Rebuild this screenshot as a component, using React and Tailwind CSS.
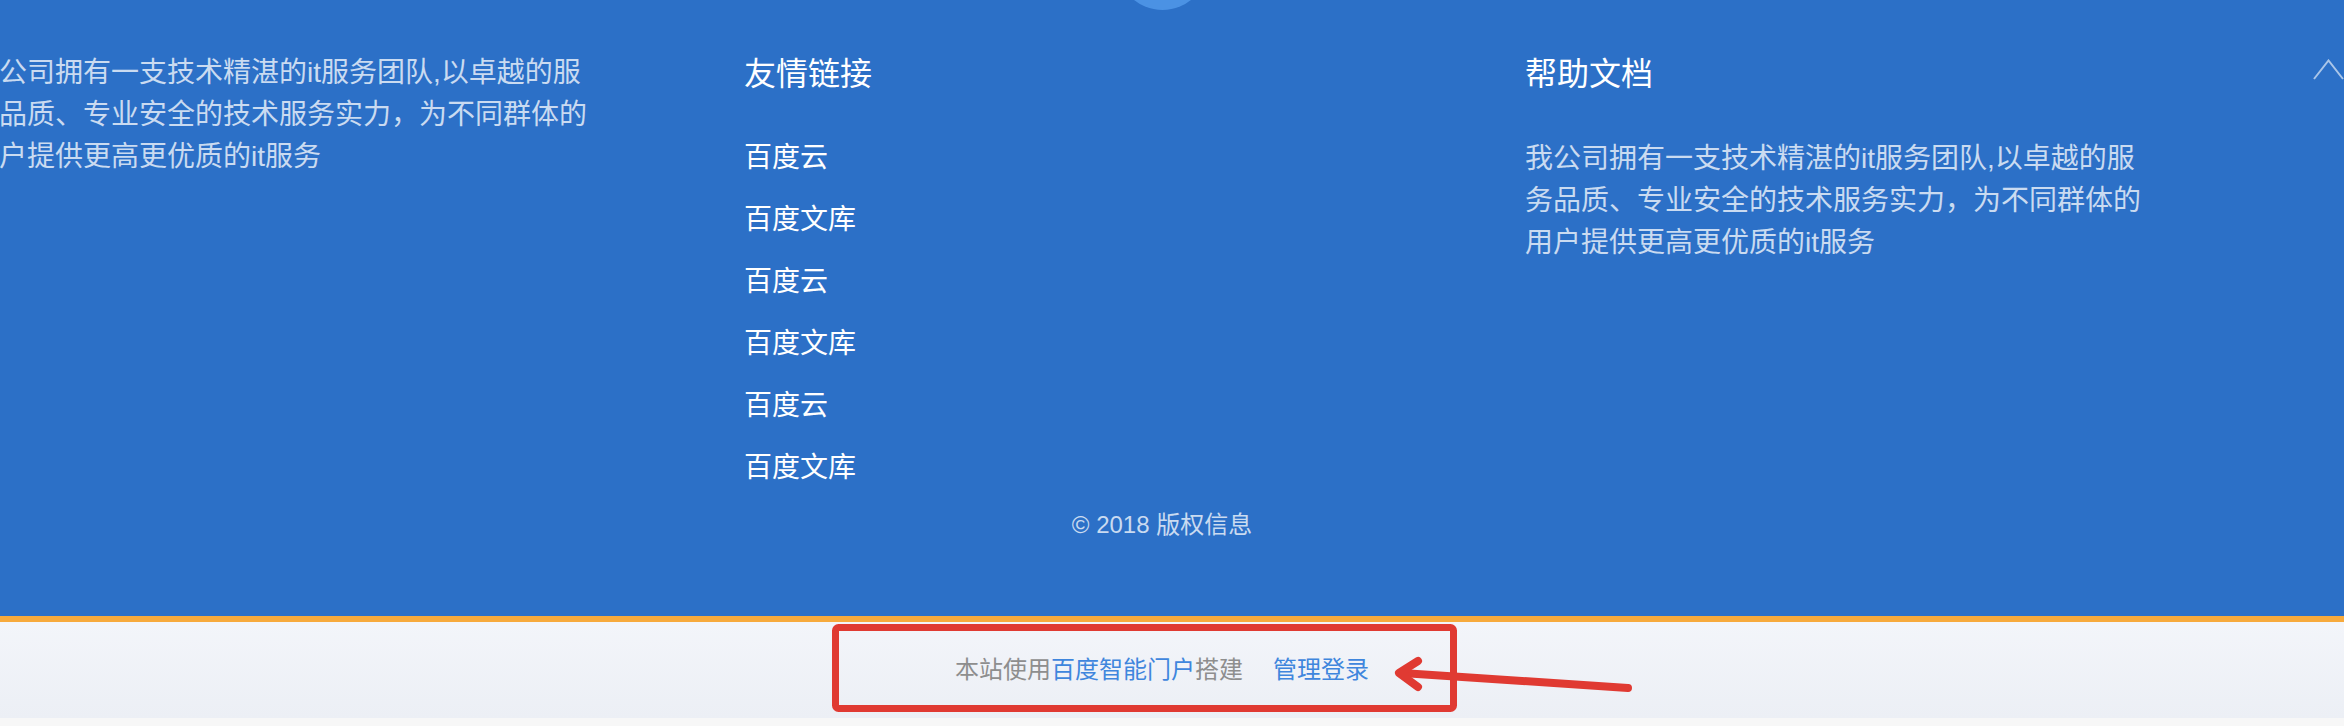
import React from 'react';

const links = ['百度云', '百度文库', '百度云', '百度文库', '百度云', '百度文库'];
const intro = '我公司拥有一支技术精湛的it服务团队,以卓越的服务品质、专业安全的技术服务实力，为不同群体的用户提供更高更优质的it服务';

const App = () => {
  return (
    <div className="relative w-full h-[726px] overflow-hidden bg-[#f7f7f7] font-['Liberation_Sans','Noto_Sans_CJK_SC',sans-serif]">
      {/* Footer main */}
      <div className="relative h-[616px] bg-[#2c70c7]">
        {/* back-to-top bubble */}
        <div className="absolute left-[1117px] top-[-81px] w-[91px] h-[91px] rounded-full bg-[#4b92e4]" />
        {/* collapse chevron */}
        <svg className="absolute right-0 top-[59px] w-[31px] h-[21px]" viewBox="0 0 31 21" fill="none">
          <polyline points="1,20 15.5,1.5 30,20" stroke="rgba(255,255,255,0.6)" strokeWidth="2" />
        </svg>

        <div className="flex pt-[50px] ml-[-29px]">
          {/* About */}
          <div className="w-[773px] shrink-0 pt-[2px]">
            <p className="w-[626px] text-[28px] leading-[42px] text-white/75">{intro}</p>
          </div>

          {/* Links */}
          <div className="w-[781px] shrink-0">
            <h3 className="text-[32px] leading-[48px] text-white">友情链接</h3>
            <ul className="mt-[39px] flex flex-col gap-[20px]">
              {links.map((l, i) => (
                <li key={i} className="text-[28px] leading-[42px] text-white">{l}</li>
              ))}
            </ul>
          </div>

          {/* Help */}
          <div className="flex-1">
            <h3 className="text-[32px] leading-[48px] text-white">帮助文档</h3>
            <p className="mt-[40px] w-[626px] text-[28px] leading-[42px] text-white/75">{intro}</p>
          </div>
        </div>

        <p className="mt-[18px] pr-[20px] text-center text-[24px] leading-[36px] text-white/75">© 2018 版权信息</p>
      </div>

      <div className="h-[6px] bg-[#f7aa3d]" />

      {/* Powered by bar */}
      <div className="h-[96px] flex items-center justify-center pr-[20px] bg-gradient-to-b from-[#f3f5fa] to-[#eceff5] text-[24px] leading-[36px]">
        <span className="text-[#8e8e8e]">本站使用</span>
        <span className="text-[#3f86dd]">百度智能门户</span>
        <span className="text-[#8e8e8e]">搭建</span>
        <span className="ml-[30px] text-[#3f86dd]">管理登录</span>
      </div>

      {/* annotation overlay */}
      <svg className="absolute inset-0 pointer-events-none" width="2344" height="726" viewBox="0 0 2344 726" fill="none">
        <rect x="835.5" y="627.5" width="618" height="81" rx="3" stroke="#e03a32" strokeWidth="7" />
        <line x1="1402" y1="673" x2="1628" y2="688" stroke="#e03a32" strokeWidth="8" strokeLinecap="round" />
        <polyline points="1418,661 1399,673 1418,687" stroke="#e03a32" strokeWidth="8" strokeLinecap="round" strokeLinejoin="round" />
      </svg>
    </div>
  );
};

export default App;
